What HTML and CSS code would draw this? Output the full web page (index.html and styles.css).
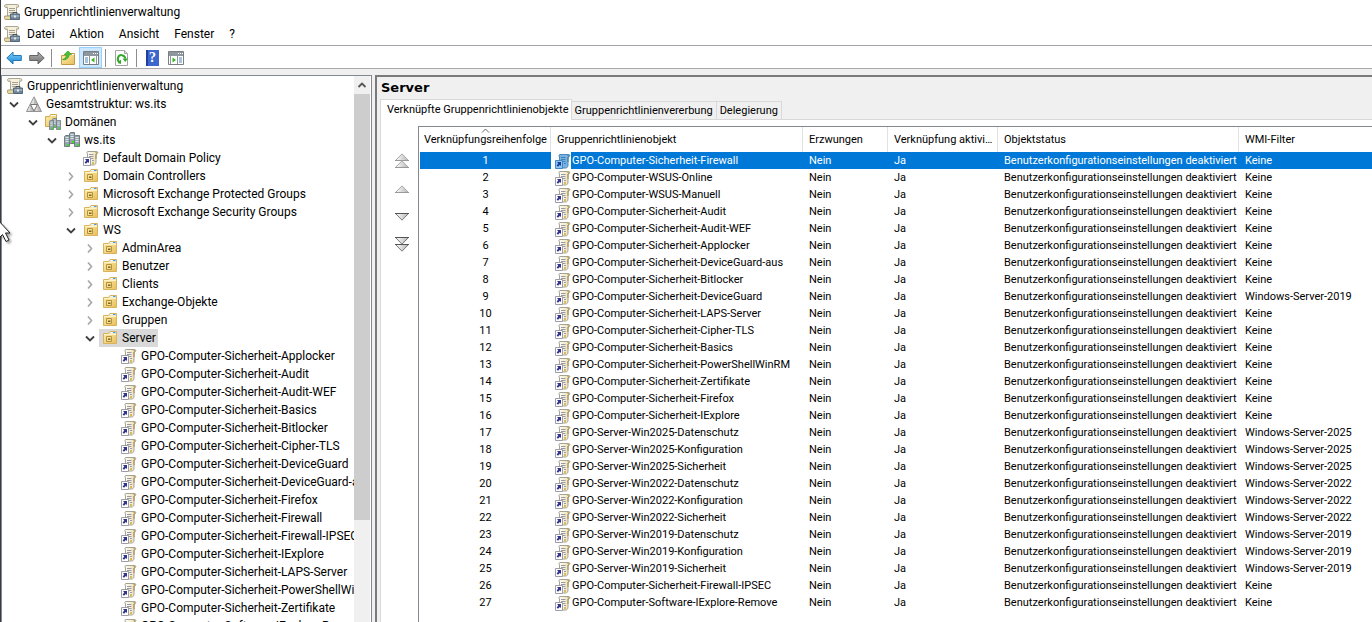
FILE: index.html
```
<!DOCTYPE html>
<html lang="de">
<head>
<meta charset="utf-8">
<title>Gruppenrichtlinienverwaltung</title>
<link rel="stylesheet" href="styles.css">
</head>
<body>
<svg class="defs" aria-hidden="true">
<defs>
<linearGradient id="gf" x1="0" y1="0" x2="1" y2="1"><stop offset="0" stop-color="#fdeeb0"/><stop offset="1" stop-color="#e8bf5a"/></linearGradient>
<linearGradient id="gp" x1="0" y1="0" x2="1" y2="0"><stop offset="0" stop-color="#fffffb"/><stop offset="1" stop-color="#eadfae"/></linearGradient>
<linearGradient id="gb" x1="0" y1="0" x2="0" y2="1"><stop offset="0" stop-color="#7fd3fb"/><stop offset="1" stop-color="#1583d6"/></linearGradient>
<linearGradient id="gg" x1="0" y1="0" x2="0" y2="1"><stop offset="0" stop-color="#b5b5b5"/><stop offset="1" stop-color="#6d6d6d"/></linearGradient>
<linearGradient id="gt" x1="0" y1="0" x2="1" y2="0"><stop offset="0" stop-color="#ffffff"/><stop offset="1" stop-color="#b4b4b4"/></linearGradient>
</defs>
<symbol id="app" viewBox="0 0 16 16"><path d="M2 .5h11.500c1.800 0 1.800 3 0 3h-1V12H3.500V3.500H2C0 3.500 0 .5 2 .5z" fill="#f6f1dc" stroke="#aaa594"/><path d="M1 1.500h2.500v1.500H1zM12 1.500h2v1.500h-2z" fill="#d6cfae"/><path d="M5 4.500h6M5 6.500h6M5 8.500h4" stroke="#a5a192"/><path d="M.8 12h6v3.500H2c-1.800 0-2-2-1.200-3.500z" fill="#e6d9a6" stroke="#a59a73"/><path d="M9 10V8.500h4V10" fill="none" stroke="#44525f"/><path d="M6.500 10h9v5.500h-9z" fill="#72869a" stroke="#54687b"/><path d="M7 12h8.500" stroke="#b8c6d2"/><path d="M10 11.500h2v2h-2z" fill="#e5e9ec"/></symbol>
<symbol id="gpo" viewBox="0 0 16 16"><path d="M5 1.500h8.500c2 0 1.500 2.500-.5 2.500V12c0 2-1 3-2.500 3H7.500V13H4.500V4C3.500 2.500 4 1.500 5 1.500z" fill="url(#gp)" stroke="#a5a294"/><path d="M12.500 2.500c1.500-1 2.500 1 .5 1.500V9" fill="none" stroke="#a48e4d"/><path d="M6 4.500h4.500M6 6.500h4.500M6 8.500h4.500M9 10.500h2" stroke="#9b97a6"/><path d="M9 12h2v2.500H9z" fill="#d6ba63"/><path d="M.5 7.500h7v8h-7z" fill="#fff" stroke="#9d9da8"/><path d="M2 9h4v4L4.800 11.900 3 13.800 1.600 12.400 3.300 10.500z" fill="#32328f"/></symbol>
<symbol id="gposel" viewBox="0 0 16 16"><path d="M5 1.500h8.500c2 0 1.500 2.500-.5 2.500V12c0 2-1 3-2.500 3H7.500V13H4.500V4C3.500 2.500 4 1.500 5 1.500z" fill="#77b3e0" stroke="#4b87b8"/><path d="M12.500 2.500c1.500-1 2.500 1 .5 1.500V9" fill="none" stroke="#4e7b94"/><path d="M6 4.500h4.500M6 6.500h4.500M6 8.500h4.500M9 10.500h2" stroke="#3a80bd"/><path d="M.5 7.500h7v8h-7z" fill="#8fc5f0" stroke="#4386c0"/><path d="M2 9h4v4L4.800 11.900 3 13.800 1.600 12.400 3.300 10.500z" fill="#153fa0"/></symbol>
<symbol id="ou" viewBox="0 0 16 16"><path d="M1.500 3.500h5l1.500-2h6.500v12h-13z" fill="url(#gf)" stroke="#d8b25c"/><path d="M8.500 2H14v1.500H7.500z" fill="#eef6fd"/><path d="M11 2h2.500v1H11z" fill="#4f9be0"/><path d="M2 4.500h12" stroke="#fff4c8"/><path d="M4.500 6.500h5v5h-5z" fill="#f8e08c" stroke="#b29240"/><path d="M6 8.500h2.500V10H6z" fill="#7d6222"/></symbol>
<symbol id="forest" viewBox="0 0 16 16"><path d="M8 .8 15.500 15.500H.5z" fill="#bdbdbd" stroke="#949494"/><path d="M8 2 4.500 8.500H8zM4 9.500 1.500 15H4.500zM11.500 9.500 9 15h2.500z" fill="#dedede"/><path d="M4.500 8.500h7L8 15z" fill="#fff" stroke="#777"/></symbol>
<symbol id="srv" viewBox="0 0 6 12"><path d="M.5 1.500 1.500.5h4v11h-5z" fill="#95a3ab" stroke="#707d85"/><path d="M1.500 2.500h3M1.500 4.500h3M1.500 6.500h3" stroke="#dfe6ea"/><path d="M3 9h2v2H3z" fill="#3fdc23"/></symbol>
<symbol id="domain" viewBox="0 0 16 16"><use href="#srv" x="5" y="0" width="6" height="12"/><use href="#srv" x="0" y="3" width="6" height="12"/><use href="#srv" x="10" y="3" width="6" height="12"/></symbol>
<symbol id="domains" viewBox="0 0 16 16"><path d="M.5 2.500h4l1-2h6v12H.5z" fill="url(#gf)" stroke="#d3a94f"/><path d="M6 1.500h5" stroke="#fff"/><use href="#srv" x="7" y="4" width="5" height="10"/><use href="#srv" x="4" y="6" width="5" height="10"/><use href="#srv" x="11" y="6" width="5" height="10"/></symbol>
<symbol id="closed" viewBox="0 0 10 10"><path d="M3 1.500 6.500 5.500 3 9.500" fill="none" stroke="#a6a6a6" stroke-width="1.600"/></symbol>
<symbol id="open" viewBox="0 0 10 10"><path d="M1 3.500 5 7.500l4-4" fill="none" stroke="#404040" stroke-width="1.800"/></symbol>
<symbol id="up" viewBox="0 0 16 8"><path d="M8 .8 14.500 7.500h-13z" fill="url(#gt)" stroke="#a9a9a9"/><path d="M1 7.500h14" stroke="#999"/></symbol>
<symbol id="down" viewBox="0 0 16 8"><path d="M1.500.5h13L8 7.200z" fill="url(#gt)" stroke="#777"/><path d="M1 .5h14" stroke="#555"/></symbol>
</svg>

<div class="window">
<header class="titlebar"><svg class="ic"><use href="#app"/></svg><span>Gruppenrichtlinienverwaltung</span></header>
<nav class="menubar"><svg class="ic"><use href="#app"/></svg><button>Datei</button><button>Aktion</button><button>Ansicht</button><button>Fenster</button><button>?</button></nav>
<div class="toolbar">
<button aria-label="Zurück"><svg class="ic" viewBox="0 0 16 16"><path d="M.8 8 7 2v3.500h8.300v5H7V14z" fill="url(#gb)" stroke="#2478b5"/></svg></button>
<button aria-label="Vorwärts"><svg class="ic" viewBox="0 0 16 16"><path d="M15.200 8 9 2v3.500H.7v5H9V14z" fill="url(#gg)" stroke="#666"/></svg></button>
<i class="sep"></i>
<button aria-label="Übergeordnet"><svg class="ic" viewBox="0 0 16 16"><path d="M1.500 5.500h6l2-2h5v11h-13z" fill="url(#gf)" stroke="#c69a45"/><path d="M10 4.500h4" stroke="#fff"/><path d="M2.500 9.500C5 9 6.500 7 6.500 4.500H4.200L8 1l3.500 3.500H9.300C9 8 6 10.500 2.500 9.500z" fill="#4bc233" stroke="#2f9a22" stroke-width=".7"/></svg></button>
<button class="on" aria-label="Konsolenstruktur"><svg class="ic" viewBox="0 0 16 16"><path d="M.5 1.500h15v13H.5z" fill="#fff" stroke="#777e85"/><path d="M1 2h14v3H1z" fill="#8f979e"/><path d="M10 3.500h1M12 3.500h1M14 3.500h1" stroke="#fff"/><path d="M1 5.500h14M6.500 6v8M13.500 6v8" stroke="#8f979e"/><path d="M2 8h3M2 10h3M2 12h3" stroke="#4e87bd"/><path d="M11.500 7.500v5L8 10z" fill="#37b51e"/></svg></button>
<i class="sep"></i>
<button aria-label="Aktualisieren"><svg class="ic" viewBox="0 0 16 16"><path d="M1.500.5h9l3 3v12h-12z" fill="#fff" stroke="#a4a4a4"/><path d="M10.500.5v3h3" fill="#ddd" stroke="#a4a4a4"/><path d="M6 12.200A3.700 3.700 0 1 1 11.200 8.500" fill="none" stroke="#35a82b" stroke-width="2"/><path d="M8.500 8.500H14L11.200 12zM7 9.500v4.500l-3.500-1z" fill="#35a82b"/></svg></button>
<i class="sep"></i>
<button class="help" aria-label="Hilfe">?</button>
<button aria-label="Aktionsbereich"><svg class="ic" viewBox="0 0 16 16"><path d="M.5 1.500h15v13H.5z" fill="#fff" stroke="#777e85"/><path d="M1 2h14v3H1z" fill="#8f979e"/><path d="M10 3.500h1M12 3.500h1M14 3.500h1" stroke="#fff"/><path d="M1 5.500h14M2.500 6v8M9.500 6v8" stroke="#8f979e"/><path d="M11 8h3M11 10h3M11 12h3" stroke="#4e87bd"/><path d="M4.500 7.500v5L8 10z" fill="#37b51e"/></svg></button>
</div>
<div class="panes">
<aside class="treepane">
<ul class="tree">
<li><div class="node"><svg class="ic"><use href="#app"/></svg><span>Gruppenrichtlinienverwaltung</span></div>
<ul class="first"><li><div class="node"><button aria-label="Zuklappen"><svg><use href="#open"/></svg></button><svg class="ic"><use href="#forest"/></svg><span>Gesamtstruktur: ws.its</span></div>
<ul><li><div class="node"><button aria-label="Zuklappen"><svg><use href="#open"/></svg></button><svg class="ic"><use href="#domains"/></svg><span>Domänen</span></div>
<ul><li><div class="node"><button aria-label="Zuklappen"><svg><use href="#open"/></svg></button><svg class="ic"><use href="#domain"/></svg><span>ws.its</span></div>
<ul>
<li><div class="node leaf"><svg class="ic"><use href="#gpo"/></svg><span>Default Domain Policy</span></div>
<li><div class="node"><button aria-label="Aufklappen"><svg><use href="#closed"/></svg></button><svg class="ic"><use href="#ou"/></svg><span>Domain Controllers</span></div>
<li><div class="node"><button aria-label="Aufklappen"><svg><use href="#closed"/></svg></button><svg class="ic"><use href="#ou"/></svg><span>Microsoft Exchange Protected Groups</span></div>
<li><div class="node"><button aria-label="Aufklappen"><svg><use href="#closed"/></svg></button><svg class="ic"><use href="#ou"/></svg><span>Microsoft Exchange Security Groups</span></div>
<li><div class="node"><button aria-label="Zuklappen"><svg><use href="#open"/></svg></button><svg class="ic"><use href="#ou"/></svg><span>WS</span></div>
<ul>
<li><div class="node"><button aria-label="Aufklappen"><svg><use href="#closed"/></svg></button><svg class="ic"><use href="#ou"/></svg><span>AdminArea</span></div>
<li><div class="node"><button aria-label="Aufklappen"><svg><use href="#closed"/></svg></button><svg class="ic"><use href="#ou"/></svg><span>Benutzer</span></div>
<li><div class="node"><button aria-label="Aufklappen"><svg><use href="#closed"/></svg></button><svg class="ic"><use href="#ou"/></svg><span>Clients</span></div>
<li><div class="node"><button aria-label="Aufklappen"><svg><use href="#closed"/></svg></button><svg class="ic"><use href="#ou"/></svg><span>Exchange-Objekte</span></div>
<li><div class="node"><button aria-label="Aufklappen"><svg><use href="#closed"/></svg></button><svg class="ic"><use href="#ou"/></svg><span>Gruppen</span></div>
<li><div class="node current"><button aria-label="Zuklappen"><svg><use href="#open"/></svg></button><div class="mark"><svg class="ic"><use href="#ou"/></svg><span>Server</span></div></div>
<ul>
<li><div class="node leaf"><svg class="ic"><use href="#gpo"/></svg><span>GPO-Computer-Sicherheit-Applocker</span></div>
<li><div class="node leaf"><svg class="ic"><use href="#gpo"/></svg><span>GPO-Computer-Sicherheit-Audit</span></div>
<li><div class="node leaf"><svg class="ic"><use href="#gpo"/></svg><span>GPO-Computer-Sicherheit-Audit-WEF</span></div>
<li><div class="node leaf"><svg class="ic"><use href="#gpo"/></svg><span>GPO-Computer-Sicherheit-Basics</span></div>
<li><div class="node leaf"><svg class="ic"><use href="#gpo"/></svg><span>GPO-Computer-Sicherheit-Bitlocker</span></div>
<li><div class="node leaf"><svg class="ic"><use href="#gpo"/></svg><span>GPO-Computer-Sicherheit-Cipher-TLS</span></div>
<li><div class="node leaf"><svg class="ic"><use href="#gpo"/></svg><span>GPO-Computer-Sicherheit-DeviceGuard</span></div>
<li><div class="node leaf"><svg class="ic"><use href="#gpo"/></svg><span>GPO-Computer-Sicherheit-DeviceGuard-aus</span></div>
<li><div class="node leaf"><svg class="ic"><use href="#gpo"/></svg><span>GPO-Computer-Sicherheit-Firefox</span></div>
<li><div class="node leaf"><svg class="ic"><use href="#gpo"/></svg><span>GPO-Computer-Sicherheit-Firewall</span></div>
<li><div class="node leaf"><svg class="ic"><use href="#gpo"/></svg><span>GPO-Computer-Sicherheit-Firewall-IPSEC</span></div>
<li><div class="node leaf"><svg class="ic"><use href="#gpo"/></svg><span>GPO-Computer-Sicherheit-IExplore</span></div>
<li><div class="node leaf"><svg class="ic"><use href="#gpo"/></svg><span>GPO-Computer-Sicherheit-LAPS-Server</span></div>
<li><div class="node leaf"><svg class="ic"><use href="#gpo"/></svg><span>GPO-Computer-Sicherheit-PowerShellWinRM</span></div>
<li><div class="node leaf"><svg class="ic"><use href="#gpo"/></svg><span>GPO-Computer-Sicherheit-Zertifikate</span></div>
<li><div class="node leaf"><svg class="ic"><use href="#gpo"/></svg><span>GPO-Computer-Software-IExplore-Remove</span></div>
</ul></ul></ul></ul></ul></ul>
</ul>
<div class="scroll"><button aria-label="Nach oben"><svg viewBox="0 0 10 10"><path d="M1.500 7 5 3.500 8.500 7" fill="none" stroke="#555" stroke-width="1.800"/></svg></button><div class="thumb"></div></div>
</aside>
<main class="detail">
<h1>Server</h1>
<div class="tabs" role="tablist"><button role="tab" class="active" aria-selected="true">Verknüpfte Gruppenrichtlinienobjekte</button><button role="tab">Gruppenrichtlinienvererbung</button><button role="tab">Delegierung</button></div>
<section class="sheet">
<div class="order">
<button aria-label="Ganz nach oben"><svg><use href="#up"/></svg><svg><use href="#up"/></svg></button>
<button aria-label="Nach oben"><svg><use href="#up"/></svg></button>
<button aria-label="Nach unten"><svg><use href="#down"/></svg></button>
<button aria-label="Ganz nach unten"><svg><use href="#down"/></svg><svg><use href="#down"/></svg></button>
</div>
<div class="list">
<table>
<colgroup><col class="c1"><col class="c2"><col class="c3"><col class="c4"><col class="c5"><col></colgroup>
<thead><tr><th><svg class="sort" viewBox="0 0 9 5"><path d="M1 4.500 4.500 1 8 4.500" fill="none" stroke="#666"/></svg>Verknüpfungsreihenfolge<th>Gruppenrichtlinienobjekt<th>Erzwungen<th>Verknüpfung aktiviert<th>Objektstatus<th>WMI-Filter</thead>
<tbody>
<tr class="sel"><td>1<td><svg class="ic"><use href="#gposel"/></svg>GPO-Computer-Sicherheit-Firewall<td>Nein<td>Ja<td>Benutzerkonfigurationseinstellungen deaktiviert<td>Keine
<tr><td>2<td><svg class="ic"><use href="#gpo"/></svg>GPO-Computer-WSUS-Online<td>Nein<td>Ja<td>Benutzerkonfigurationseinstellungen deaktiviert<td>Keine
<tr><td>3<td><svg class="ic"><use href="#gpo"/></svg>GPO-Computer-WSUS-Manuell<td>Nein<td>Ja<td>Benutzerkonfigurationseinstellungen deaktiviert<td>Keine
<tr><td>4<td><svg class="ic"><use href="#gpo"/></svg>GPO-Computer-Sicherheit-Audit<td>Nein<td>Ja<td>Benutzerkonfigurationseinstellungen deaktiviert<td>Keine
<tr><td>5<td><svg class="ic"><use href="#gpo"/></svg>GPO-Computer-Sicherheit-Audit-WEF<td>Nein<td>Ja<td>Benutzerkonfigurationseinstellungen deaktiviert<td>Keine
<tr><td>6<td><svg class="ic"><use href="#gpo"/></svg>GPO-Computer-Sicherheit-Applocker<td>Nein<td>Ja<td>Benutzerkonfigurationseinstellungen deaktiviert<td>Keine
<tr><td>7<td><svg class="ic"><use href="#gpo"/></svg>GPO-Computer-Sicherheit-DeviceGuard-aus<td>Nein<td>Ja<td>Benutzerkonfigurationseinstellungen deaktiviert<td>Keine
<tr><td>8<td><svg class="ic"><use href="#gpo"/></svg>GPO-Computer-Sicherheit-Bitlocker<td>Nein<td>Ja<td>Benutzerkonfigurationseinstellungen deaktiviert<td>Keine
<tr><td>9<td><svg class="ic"><use href="#gpo"/></svg>GPO-Computer-Sicherheit-DeviceGuard<td>Nein<td>Ja<td>Benutzerkonfigurationseinstellungen deaktiviert<td>Windows-Server-2019
<tr><td>10<td><svg class="ic"><use href="#gpo"/></svg>GPO-Computer-Sicherheit-LAPS-Server<td>Nein<td>Ja<td>Benutzerkonfigurationseinstellungen deaktiviert<td>Keine
<tr><td>11<td><svg class="ic"><use href="#gpo"/></svg>GPO-Computer-Sicherheit-Cipher-TLS<td>Nein<td>Ja<td>Benutzerkonfigurationseinstellungen deaktiviert<td>Keine
<tr><td>12<td><svg class="ic"><use href="#gpo"/></svg>GPO-Computer-Sicherheit-Basics<td>Nein<td>Ja<td>Benutzerkonfigurationseinstellungen deaktiviert<td>Keine
<tr><td>13<td><svg class="ic"><use href="#gpo"/></svg>GPO-Computer-Sicherheit-PowerShellWinRM<td>Nein<td>Ja<td>Benutzerkonfigurationseinstellungen deaktiviert<td>Keine
<tr><td>14<td><svg class="ic"><use href="#gpo"/></svg>GPO-Computer-Sicherheit-Zertifikate<td>Nein<td>Ja<td>Benutzerkonfigurationseinstellungen deaktiviert<td>Keine
<tr><td>15<td><svg class="ic"><use href="#gpo"/></svg>GPO-Computer-Sicherheit-Firefox<td>Nein<td>Ja<td>Benutzerkonfigurationseinstellungen deaktiviert<td>Keine
<tr><td>16<td><svg class="ic"><use href="#gpo"/></svg>GPO-Computer-Sicherheit-IExplore<td>Nein<td>Ja<td>Benutzerkonfigurationseinstellungen deaktiviert<td>Keine
<tr><td>17<td><svg class="ic"><use href="#gpo"/></svg>GPO-Server-Win2025-Datenschutz<td>Nein<td>Ja<td>Benutzerkonfigurationseinstellungen deaktiviert<td>Windows-Server-2025
<tr><td>18<td><svg class="ic"><use href="#gpo"/></svg>GPO-Server-Win2025-Konfiguration<td>Nein<td>Ja<td>Benutzerkonfigurationseinstellungen deaktiviert<td>Windows-Server-2025
<tr><td>19<td><svg class="ic"><use href="#gpo"/></svg>GPO-Server-Win2025-Sicherheit<td>Nein<td>Ja<td>Benutzerkonfigurationseinstellungen deaktiviert<td>Windows-Server-2025
<tr><td>20<td><svg class="ic"><use href="#gpo"/></svg>GPO-Server-Win2022-Datenschutz<td>Nein<td>Ja<td>Benutzerkonfigurationseinstellungen deaktiviert<td>Windows-Server-2022
<tr><td>21<td><svg class="ic"><use href="#gpo"/></svg>GPO-Server-Win2022-Konfiguration<td>Nein<td>Ja<td>Benutzerkonfigurationseinstellungen deaktiviert<td>Windows-Server-2022
<tr><td>22<td><svg class="ic"><use href="#gpo"/></svg>GPO-Server-Win2022-Sicherheit<td>Nein<td>Ja<td>Benutzerkonfigurationseinstellungen deaktiviert<td>Windows-Server-2022
<tr><td>23<td><svg class="ic"><use href="#gpo"/></svg>GPO-Server-Win2019-Datenschutz<td>Nein<td>Ja<td>Benutzerkonfigurationseinstellungen deaktiviert<td>Windows-Server-2019
<tr><td>24<td><svg class="ic"><use href="#gpo"/></svg>GPO-Server-Win2019-Konfiguration<td>Nein<td>Ja<td>Benutzerkonfigurationseinstellungen deaktiviert<td>Windows-Server-2019
<tr><td>25<td><svg class="ic"><use href="#gpo"/></svg>GPO-Server-Win2019-Sicherheit<td>Nein<td>Ja<td>Benutzerkonfigurationseinstellungen deaktiviert<td>Windows-Server-2019
<tr><td>26<td><svg class="ic"><use href="#gpo"/></svg>GPO-Computer-Sicherheit-Firewall-IPSEC<td>Nein<td>Ja<td>Benutzerkonfigurationseinstellungen deaktiviert<td>Keine
<tr><td>27<td><svg class="ic"><use href="#gpo"/></svg>GPO-Computer-Software-IExplore-Remove<td>Nein<td>Ja<td>Benutzerkonfigurationseinstellungen deaktiviert<td>Keine
</tbody>
</table>
</div>
</section>
</main>
</div>
</div>
<svg class="pointer" viewBox="0 0 14 20" aria-hidden="true"><path d="M-3-3 10 11H5.500L9 18 6 19.500 2.500 12.500-3 18z" fill="#fff" stroke="#222"/></svg>
</body>
</html>
```
FILE: styles.css
```
* { box-sizing: border-box; }
body {
  margin: 0;
  color: #000;
  background: #fff;
  font: 12px/18px Roboto, "Open Sans", sans-serif;
}
button {
  border: 0;
  padding: 0;
  background: none;
  color: inherit;
  font: inherit;
}
svg { display: block; }
.defs { position: absolute; width: 0; height: 0; }
.ic { width: 16px; height: 16px; flex: none; }
.window {
  display: flex;
  flex-direction: column;
  height: 100vh;
  border-left: 1px solid #3c3c40;
  overflow: hidden;
}
.titlebar {
  display: flex;
  align-items: center;
  gap: 4px;
  height: 24px;
  padding-left: 3px;
}
.menubar {
  display: flex;
  align-items: center;
  height: 22px;
  padding: 0 0 1px 3px;
  border-bottom: 1px solid #a3a3ad;
}
.menubar button { padding: 0 8px 0 7px; }
.toolbar {
  display: flex;
  align-items: center;
  height: 23px;
  padding: 1px 0 0 1px;
  border-bottom: 1px solid #a9a9a9;
}
.toolbar button {
  display: grid;
  place-items: center;
  width: 23px;
  height: 21px;
}
.toolbar .on { background: #cce8ff; border: 1px solid #99d1ff; }
.toolbar .help {
  width: 13px;
  height: 16px;
  margin: 0 5px;
  background: linear-gradient(to right, #1f3f9c 2px, #3d66cf 2px);
  color: #fff;
  font: bold 14px/16px "Liberation Serif", serif;
}
.sep { width: 1px; height: 18px; margin: 0 4px 0 3px; background: #8d8d8d; }
.panes {
  display: flex;
  gap: 3px;
  flex: 1;
  min-height: 0;
  padding-top: 6px;
  background: #f0f0f0;
}
.treepane {
  display: flex;
  flex: none;
  width: 371px;
  border: 1px solid #828790;
  border-width: 1px 1px 0;
  padding-right: 1px;
  background: #fff;
}
.tree {
  flex: 1;
  min-width: 0;
  margin: 0;
  padding: 1px 0 0 5px;
  overflow: hidden;
  list-style: none;
}
.tree ul { margin: 0; padding: 0 0 0 19px; list-style: none; }
.tree .first { padding-left: 0; }
.node {
  display: flex;
  align-items: center;
  gap: 4px;
  height: 18px;
  white-space: nowrap;
}
.node button { width: 15px; padding-left: 2px; }
.node button svg { width: 10px; height: 10px; }
.leaf { padding-left: 19px; }
.current { gap: 1px; }
.mark {
  display: flex;
  align-items: center;
  gap: 4px;
  height: 18px;
  padding: 0 2px 0 3px;
  background: #d9d9d9;
}
.scroll { width: 16px; background: #f0f0f0; }
.scroll button { display: grid; place-items: center; width: 16px; height: 18px; }
.scroll svg { width: 10px; height: 10px; }
.thumb { height: 78%; background: #cdcdcd; }
.detail {
  display: flex;
  flex-direction: column;
  flex: 1;
  min-width: 0;
  border-top: 2px solid #7a7a7a;
  border-left: 2px solid #7a7a7a;
  padding-left: 3px;
  font: 11px/16px Roboto, "Liberation Sans", sans-serif;
}
h1 {
  margin: 0;
  padding: 2px 0 0 1px;
  height: 22px;
  font: bold 13px/18px "DejaVu Sans", sans-serif;
}
.tabs { display: flex; align-items: flex-end; height: 21px; }
.tabs button {
  height: 19px;
  border: 1px solid #d9d9d9;
  border-left: 0;
  padding: 1px 3px 0;
  white-space: nowrap;
}
.tabs .active {
  z-index: 1;
  height: 21px;
  border-left: 1px solid #d9d9d9;
  border-bottom: 0;
  padding: 0 2px 0 6px;
  background: #fff;
}
.sheet {
  display: flex;
  flex: 1;
  min-height: 0;
  margin-top: -1px;
  border: 1px solid #d9d9d9;
  border-width: 1px 0 0 1px;
  padding-top: 6px;
  background: #fff;
}
.order {
  display: flex;
  flex-direction: column;
  gap: 13px;
  width: 37px;
  flex: none;
  align-items: center;
  padding: 27px 0 0 5px;
}
.order button { height: 15px; display: flex; flex-direction: column; justify-content: center; }
.order svg { width: 16px; height: 8px; }
.order svg + svg { margin-top: -1px; }
.list {
  flex: 1;
  min-width: 0;
  border: 1px solid #828790;
  border-width: 1px 0 0 1px;
  padding-left: 1px;
  overflow: hidden;
}
table { width: 100%; table-layout: fixed; border-collapse: separate; border-spacing: 0; }
.c1 { width: 131px; }
.c2 { width: 252px; }
.c3 { width: 85px; }
.c4 { width: 110px; }
.c5 { width: 241px; }
th, td {
  padding: 1px 0 0 6px;
  overflow: hidden;
  text-align: left;
  font-weight: normal;
  white-space: nowrap;
  text-overflow: ellipsis;
}
th { position: relative; height: 25px; padding-right: 4px; border-right: 1px solid #e2e2e2; }
th:last-child { border-right: 0; }
th:first-child { padding: 1px 0 0 4px; }
td { height: 17px; }
td:first-child { padding: 1px 0 0; text-align: center; }
td:nth-child(2) { padding-left: 4px; }
td .ic { display: inline-block; margin-right: 1px; vertical-align: top; }
.sort { position: absolute; left: 61px; top: 1px; width: 9px; height: 5px; }
.sel td { background: #0078d7; color: #fff; }
.sel td:nth-child(2) { background: linear-gradient(to right, #fff 20px, #0078d7 20px); }
.pointer {
  position: absolute;
  left: 0;
  top: 222px;
  width: 14px;
  height: 20px;
  filter: drop-shadow(2px 2px 1px rgba(0, 0, 0, .35));
}
```
